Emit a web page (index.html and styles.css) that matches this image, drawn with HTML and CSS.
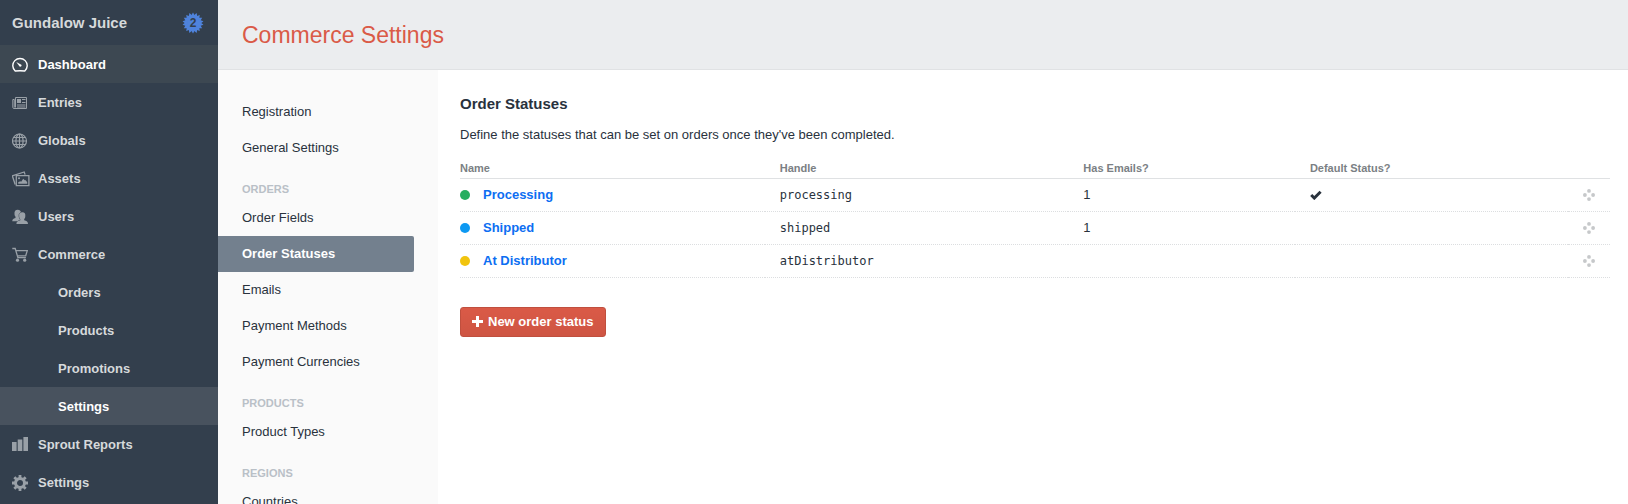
FILE: index.html
```html
<!DOCTYPE html>
<html lang="en">
<head>
<meta charset="utf-8">
<title>Commerce Settings</title>
<link rel="stylesheet" href="styles.css">
</head>
<body>
<div class="app">
  <div class="sidebar">
    <div class="site">
      <span class="site-name">Gundalow Juice</span>
      <a class="updates" href="#" aria-label="2 updates">
        <svg class="burst" viewBox="0 0 22 22" aria-hidden="true"><defs><path id="tri" d="M11 .4l9.180 15.900H1.820z"/></defs><use href="#tri"/><use href="#tri" transform="rotate(20 11 11)"/><use href="#tri" transform="rotate(40 11 11)"/><use href="#tri" transform="rotate(60 11 11)"/><use href="#tri" transform="rotate(80 11 11)"/><use href="#tri" transform="rotate(100 11 11)"/></svg>
        <span class="count">2</span>
      </a>
    </div>
    <nav aria-label="Primary">
      <ul class="nav">
        <li><a class="item active" href="#"><svg class="icon" viewBox="0 0 16 16"><path d="M3.200 14A7.200 7.200 0 1 1 12.800 14Q8 13.600 3.200 14z" fill="none" stroke="currentColor" stroke-width="1.400" stroke-linejoin="round"/><path d="M4.300 5l5 2.700a1.300 1.300 0 0 1-1.700 1.900z"/></svg>Dashboard</a></li>
        <li><a class="item" href="#"><svg class="icon" viewBox="0 0 16 16"><path d="M3.500 2.500h11v11H2a1.200 1.200 0 0 1-1.200-1.200V4.500h1.500v8" fill="none" stroke="currentColor"/><path d="M3.500 2.500v10" stroke="currentColor"/><path d="M5 4h4v4H5zM10 4h3.500v1H10zM10 7h3.500v1H10zM5 9.500h8.500v1H5zM5 11.500h8.500v1H5z"/></svg>Entries</a></li>
        <li><a class="item" href="#"><svg class="icon" viewBox="0 0 16 16"><g fill="none" stroke="currentColor" stroke-width="1.200"><circle cx="7.500" cy="8" r="7"/><ellipse cx="7.500" cy="8" rx="3.600" ry="7"/><path d="M7.500 1v14M.5 8h14M1.500 4.500h12M1.500 11.500h12"/></g></svg>Globals</a></li>
        <li><a class="item" href="#"><svg class="icon wide" viewBox="0 0 18 16"><g fill="none" stroke="currentColor" stroke-width="1.300"><path d="M4.300 4.600h12.600v10H4.300z"/><path d="M3.200 13.500L.3 4.800 12.200 1l.9 2.600"/></g><circle cx="7" cy="7.300" r="1"/><path d="M6.200 12.700v-1.500l2-1 1 .5 2-3 1.500 1.500h1l1.500 2v1.500z"/></svg>Assets</a></li>
        <li><a class="item" href="#"><svg class="icon" viewBox="0 0 16 16"><path d="M5.700.8c2 0 3 1 3.200 2.300V10.500l-3 1.800H.3c0-2.300.8-2.500 3.200-3.400V7.700c-.7-.6-1-1.600-1-2.600C2.200 2.300 3.500.8 5.700.8z"/><path class="front" d="M10.300 3.200c2.400 0 3.300 1.600 3 4-.1 1.300-.4 2.200-1.100 2.900v1.200c2.500.9 3.800 1.300 3.800 3.700H4.400c0-2.400 1.300-2.800 3.900-3.700v-1.200c-.7-.7-1-1.600-1.100-2.900-.3-2.400.9-4 3.100-4z"/></svg>Users</a></li>
        <li><a class="item" href="#"><svg class="icon" viewBox="0 0 16 16"><path d="M.3 1.500h2.900l2.700 9.200h8M3.700 3.600h11.600l-1.600 5.200H5.200" fill="none" stroke="currentColor" stroke-width="1.300"/><circle cx="5.500" cy="13.200" r="1.600"/><circle cx="12.700" cy="13.200" r="1.600"/></svg>Commerce</a>
          <ul class="nav">
            <li><a class="item sub" href="#">Orders</a></li>
            <li><a class="item sub" href="#">Products</a></li>
            <li><a class="item sub" href="#">Promotions</a></li>
            <li><a class="item sub current" href="#">Settings</a></li>
          </ul>
        </li>
        <li><a class="item" href="#"><svg class="icon" viewBox="0 0 16 16"><path d="M0 5h4.600v9H0zM5.700 2.500h4.600V14H5.700zM11.400 0H16v14h-4.600z"/></svg>Sprout Reports</a></li>
        <li><a class="item" href="#"><svg class="icon" viewBox="0 0 16 16"><circle cx="8" cy="8" r="4.500" fill="none" stroke="currentColor" stroke-width="3"/><path d="M8 0v3M8 13v3M0 8h3M13 8h3M2.340 2.340l2 2M11.660 11.660l2 2M2.340 13.660l2-2M11.660 4.340l2-2" stroke="currentColor" stroke-width="2.800"/></svg>Settings</a></li>
      </ul>
    </nav>
  </div>
  <div class="page">
    <header class="header"><h1>Commerce Settings</h1></header>
    <div class="body">
      <nav class="subnav" aria-label="Commerce settings">
        <a href="#">Registration</a>
        <a href="#">General Settings</a>
        <h2>Orders</h2>
        <a href="#">Order Fields</a>
        <a class="selected" href="#">Order Statuses</a>
        <a href="#">Emails</a>
        <a href="#">Payment Methods</a>
        <a href="#">Payment Currencies</a>
        <h2>Products</h2>
        <a href="#">Product Types</a>
        <h2>Regions</h2>
        <a href="#">Countries</a>
      </nav>
      <main class="content">
        <h2>Order Statuses</h2>
        <p>Define the statuses that can be set on orders once they've been completed.</p>
        <table>
          <colgroup><col class="c-name"><col class="c-handle"><col class="c-emails"><col><col class="c-move"></colgroup>
          <thead><tr><th>Name</th><th>Handle</th><th>Has Emails?</th><th>Default Status?</th><th></th></tr></thead>
          <tbody>
            <tr><td><a class="status" href="#"><span class="dot green"></span>Processing</a></td><td><code>processing</code></td><td>1</td><td><svg class="check" viewBox="0 0 12 10" role="img" aria-label="Yes"><path d="M1.200 5l3.100 3.100L10.600 1.700" fill="none" stroke="currentColor" stroke-width="2.900"/></svg></td><td><button class="move" aria-label="Reorder Processing"><svg viewBox="0 0 12 12"><circle cx="6" cy="1.900" r="1.900"/><circle cx="1.900" cy="6" r="1.900"/><circle cx="10.100" cy="6" r="1.900"/><circle cx="6" cy="10.100" r="1.900"/></svg></button></td></tr>
            <tr><td><a class="status" href="#"><span class="dot blue"></span>Shipped</a></td><td><code>shipped</code></td><td>1</td><td></td><td><button class="move" aria-label="Reorder Shipped"><svg viewBox="0 0 12 12"><circle cx="6" cy="1.900" r="1.900"/><circle cx="1.900" cy="6" r="1.900"/><circle cx="10.100" cy="6" r="1.900"/><circle cx="6" cy="10.100" r="1.900"/></svg></button></td></tr>
            <tr><td><a class="status" href="#"><span class="dot yellow"></span>At Distributor</a></td><td><code>atDistributor</code></td><td></td><td></td><td><button class="move" aria-label="Reorder At Distributor"><svg viewBox="0 0 12 12"><circle cx="6" cy="1.900" r="1.900"/><circle cx="1.900" cy="6" r="1.900"/><circle cx="10.100" cy="6" r="1.900"/><circle cx="6" cy="10.100" r="1.900"/></svg></button></td></tr>
          </tbody>
        </table>
        <button class="btn"><svg viewBox="0 0 11 11" aria-hidden="true"><path d="M5.500 0v11M0 5.500h11" stroke="currentColor" stroke-width="3"/></svg>New order status</button>
      </main>
    </div>
  </div>
</div>
</body>
</html>
```
FILE: styles.css
```css
* { box-sizing: border-box; }
html, body { height: 100%; }
body {
  margin: 0;
  overflow: hidden;
  font: 13px/18px "Liberation Sans", Arial, sans-serif;
  color: #29323d;
  background: #fff;
}
h1, h2, p, ul { margin: 0; padding: 0; }
ul { list-style: none; }
a { color: inherit; text-decoration: none; }
button { font: inherit; cursor: pointer; }
svg { fill: currentColor; flex: none; }

.app { display: flex; height: 100%; }

.sidebar {
  flex: none;
  width: 218px;
  overflow: hidden;
  background: #333f4d;
  color: #d6d9db;
  font-weight: bold;
}
.site {
  display: flex;
  align-items: center;
  justify-content: space-between;
  height: 45px;
  padding: 0 14px 0 12px;
  font-size: 15px;
}
.updates {
  display: grid;
  place-items: center;
  font-size: 12px;
  color: #333f4d;
}
.burst { width: 22px; height: 22px; color: #4f83dc; }
.burst, .count { grid-area: 1 / 1; }
.item {
  display: flex;
  align-items: center;
  gap: 10px;
  height: 38px;
  padding: 2px 12px 0;
}
.icon { width: 16px; height: 16px; color: #99a0a7; }
.icon.wide { width: 18px; margin-right: -2px; }
.front { stroke: #333f4d; stroke-width: 1px; paint-order: stroke; }
.item.sub { padding-left: 58px; }
.item.active { background: #3d4852; color: #fff; }
.item.active .icon { color: #fff; }
.item.current { background: #48525e; color: #fff; }

.page { flex: 1; min-width: 0; display: flex; flex-direction: column; }
.header {
  flex: none;
  display: flex;
  align-items: center;
  height: 70px;
  padding: 0 24px;
  background: #ebedef;
  border-bottom: 1px solid #e0e2e4;
}
.header h1 {
  font-size: 23px;
  line-height: 28px;
  font-weight: normal;
  color: #da5a47;
}
.body { flex: 1; min-height: 0; display: flex; }

.subnav {
  flex: none;
  width: 220px;
  padding: 24px 24px 0 0;
  overflow: hidden;
  background: #fafafa;
}
.subnav a {
  display: block;
  height: 36px;
  padding-left: 24px;
  line-height: 36px;
}
.subnav .selected {
  background: #73808e;
  border-radius: 0 2px 2px 0;
  color: #fff;
  font-weight: bold;
}
.subnav h2 {
  padding: 16px 0 4px 24px;
  font-size: 11px;
  line-height: 14px;
  text-transform: uppercase;
  color: #b9c0c7;
}

.content { flex: 1; min-width: 0; padding: 24px 18px 24px 22px; }
.content h2 { font-size: 15px; line-height: 20px; }
.content p { margin: 12px 0 14px; }

table {
  width: 100%;
  table-layout: fixed;
  border-collapse: collapse;
  text-align: left;
}
.c-name { width: 26.5%; }
.c-handle { width: 26.4%; }
.c-emails { width: 19.7%; }
.c-move { width: 42px; }
th, td { padding: 0 0 0 15px; }
th:first-child, td:first-child { padding-left: 0; }
th {
  height: 20px;
  border-bottom: 1px solid #dfe1e3;
  font-size: 11px;
  color: #7b7f84;
}
td { height: 33px; border-bottom: 1px dotted #dcdee0; }
code { font: 12px/18px "DejaVu Sans Mono", monospace; }
.status {
  display: flex;
  align-items: center;
  gap: 13px;
  font-weight: bold;
  color: #0d6ef2;
}
.dot { width: 10px; height: 10px; border-radius: 50%; }
.green { background: #27ae60; }
.blue { background: #0d99f2; }
.yellow { background: #f1c40e; }
.check { display: block; width: 12px; height: 10px; }
.move {
  display: block;
  padding: 0;
  border: 0;
  background: none;
  color: #c6c8ca;
}
.move svg { display: block; width: 12px; height: 12px; }

.btn {
  display: flex;
  align-items: center;
  gap: 5px;
  height: 30px;
  margin-top: 29px;
  padding: 0 12px 0 11px;
  border: 1px solid #c04f3e;
  border-radius: 3px;
  background: linear-gradient(#da5a47, #ce5543);
  color: #fff;
  font-weight: bold;
}
.btn svg { width: 11px; height: 11px; }
```
